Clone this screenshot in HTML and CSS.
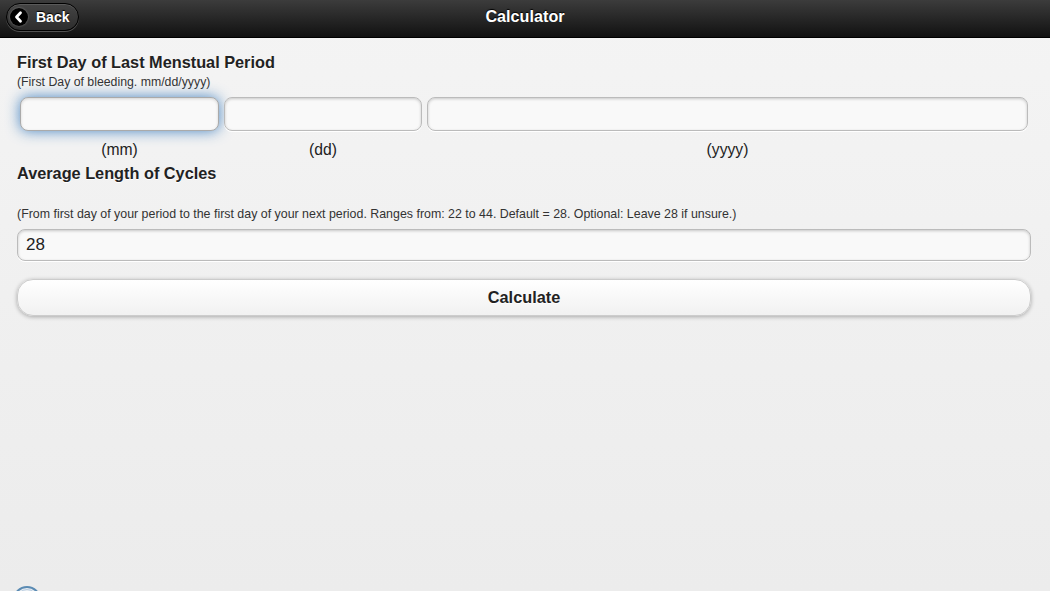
FILE: index.html
```html
<!DOCTYPE html>
<html>
<head>
<meta charset="utf-8">
<title>Calculator</title>
<link rel="stylesheet" href="styles.css">
</head>
<body>
<div class="page">
  <header class="bar">
    <div class="bar-left">
      <a class="back-btn" href="#">
        <span class="back-icon">
          <svg width="18" height="18" viewBox="0 0 18 18"><circle cx="9" cy="9" r="9" fill="#000"/><path d="M10.5 4.8 L6.5 9 L10.5 13.2" fill="none" stroke="#fff" stroke-width="2.8" stroke-linecap="round" stroke-linejoin="round"/></svg>
        </span>
        <span class="back-text">Back</span>
      </a>
    </div>
    <h1 class="bar-title">Calculator</h1>
    <div class="bar-right"></div>
  </header>
  <main class="content">
    <h3 class="label-title">First Day of Last Menstual Period</h3>
    <p class="hint sub">(First Day of bleeding. mm/dd/yyyy)</p>
    <div class="date-grid">
      <input class="field focus" type="text">
      <input class="field" type="text">
      <input class="field" type="text">
      <span class="unit">(mm)</span>
      <span class="unit">(dd)</span>
      <span class="unit">(yyyy)</span>
    </div>
    <h3 class="label-title second">Average Length of Cycles</h3>
    <p class="hint desc">(From first day of your period to the first day of your next period. Ranges from: 22 to 44. Default = 28. Optional: Leave 28 if unsure.)</p>
    <input class="field cycle" type="text" value="28">
    <button class="calc-btn" type="button">Calculate</button>
  </main>
  <div class="corner-badge">
    <svg width="30" height="30" viewBox="0 0 30 30"><circle cx="15" cy="15" r="13" fill="#e9eef3" stroke="#5b8bb3" stroke-width="2"/><circle cx="15" cy="15" r="10.5" fill="none" stroke="#b9cde0" stroke-width="1"/></svg>
  </div>
</div>
</body>
</html>
```
FILE: styles.css
```css
* { box-sizing: border-box; }
html, body { margin: 0; padding: 0; height: 100%; }
body {
  font-family: "Liberation Sans", Arial, Helvetica, sans-serif;
  background: linear-gradient(#f4f4f4, #ececec);
  color: #222;
  overflow: hidden;
}
.page { position: relative; height: 591px; }
.bar {
  height: 38px;
  display: grid;
  grid-template-columns: 1fr auto 1fr;
  align-items: center;
  background: linear-gradient(#3c3c3c, #111);
  border-bottom: 1px solid #000;
}
.bar-left { padding-left: 6px; display: flex; align-items: center; }
.back-btn {
  display: flex;
  align-items: center;
  gap: 8px;
  width: 73px;
  height: 28px;
  padding-left: 3px;
  margin-top: -3px;
  border: 1px solid #000;
  border-radius: 14px;
  background: linear-gradient(#444, #2d2d2d);
  box-shadow: 0 1px 0 rgba(255,255,255,.25), inset 0 1px 0 rgba(255,255,255,.12);
  color: #fff;
  text-decoration: none;
  font-weight: bold;
  font-size: 14px;
  text-shadow: 0 -1px 1px #000;
}
.back-icon { display: flex; width: 18px; height: 18px; filter: drop-shadow(0 0 1px rgba(255,255,255,.35)); }
.back-text { line-height: 16px; }
.bar-title {
  margin: 0;
  font-size: 16.2px;
  font-weight: bold;
  color: #fff;
  text-shadow: 0 -1px 1px #000;
  margin-top: -4px;
}
.content { padding: 14px 19px 0 17px; }
.label-title {
  margin: 0;
  font-size: 16.3px;
  line-height: 20px;
  font-weight: bold;
  color: #222;
  text-shadow: 0 1px 0 #fff;
}
.hint {
  margin: 0;
  font-size: 12.3px;
  line-height: 14px;
  color: #333;
}
.sub { margin-top: 3px; }
.date-grid {
  margin-top: 8px;
  padding: 0 3px;
  display: grid;
  grid-template-columns: 199px 198px 1fr;
  column-gap: 5px;
  row-gap: 10px;
}
.field {
  display: block;
  width: 100%;
  height: 34px;
  margin: 0;
  border: 1px solid #bbb;
  border-radius: 8px;
  background: #f9f9f9;
  box-shadow: inset 0 1px 3px rgba(0,0,0,.2), 0 1px 0 #fff;
  font-family: inherit;
  font-size: 17px;
  color: #222;
  padding: 0 8px;
  outline: none;
}
.field.focus {
  box-shadow: 0 0 14px rgba(56,123,190,.9), inset 0 1px 3px rgba(0,0,0,.15);
  border-color: #aaa;
}
.unit {
  text-align: center;
  font-size: 15.7px;
  line-height: 18px;
  color: #222;
}
.second { margin-top: 4px; }
.desc { margin-top: 24px; font-size: 12.4px; }
.cycle { margin-top: 8px; height: 32px; padding: 0 8px; }
.calc-btn {
  display: block;
  width: 100%;
  height: 37px;
  margin-top: 18px;
  border: 1px solid #ccc;
  border-radius: 16px;
  background: linear-gradient(#fff, #f1f1f1);
  box-shadow: 0 1px 4px rgba(0,0,0,.3);
  font-family: inherit;
  font-size: 16.3px;
  font-weight: bold;
  color: #222;
  text-shadow: 0 1px 0 #fff;
}
.corner-badge { position: absolute; left: 12px; top: 585px; width: 30px; height: 30px; }
```
